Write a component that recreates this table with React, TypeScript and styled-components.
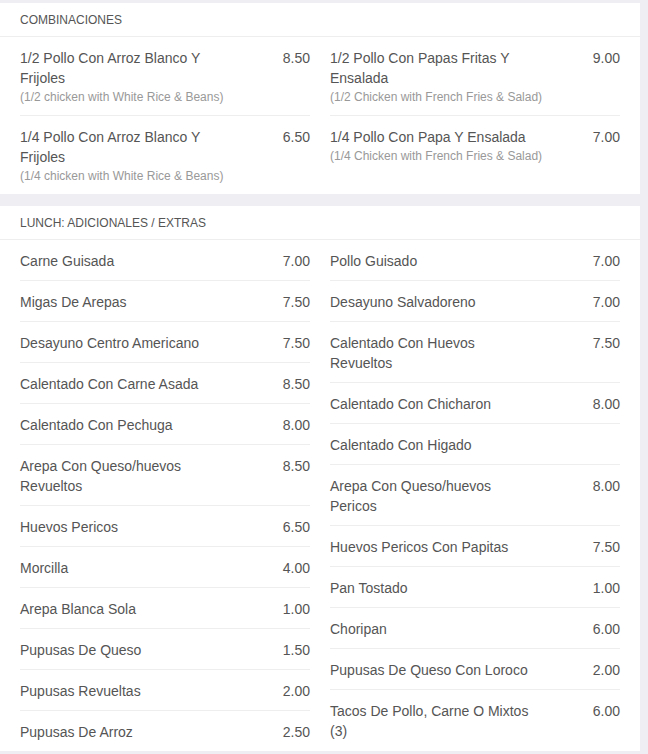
import { FC } from "react";
import styled, { createGlobalStyle } from "styled-components";

type Item = { name: string; price?: string; note?: string };

const combos: Item[][] = [
  [
    { name: "1/2 Pollo Con Arroz Blanco Y Frijoles", price: "8.50", note: "(1/2 chicken with White Rice & Beans)" },
    { name: "1/4 Pollo Con Arroz Blanco Y Frijoles", price: "6.50", note: "(1/4 chicken with White Rice & Beans)" },
  ],
  [
    { name: "1/2 Pollo Con Papas Fritas Y Ensalada", price: "9.00", note: "(1/2 Chicken with French Fries & Salad)" },
    { name: "1/4 Pollo Con Papa Y Ensalada", price: "7.00", note: "(1/4 Chicken with French Fries & Salad)" },
  ],
];

const extras: Item[][] = [
  [
    { name: "Carne Guisada", price: "7.00" },
    { name: "Migas De Arepas", price: "7.50" },
    { name: "Desayuno Centro Americano", price: "7.50" },
    { name: "Calentado Con Carne Asada", price: "8.50" },
    { name: "Calentado Con Pechuga", price: "8.00" },
    { name: "Arepa Con Queso/huevos Revueltos", price: "8.50" },
    { name: "Huevos Pericos", price: "6.50" },
    { name: "Morcilla", price: "4.00" },
    { name: "Arepa Blanca Sola", price: "1.00" },
    { name: "Pupusas De Queso", price: "1.50" },
    { name: "Pupusas Revueltas", price: "2.00" },
    { name: "Pupusas De Arroz", price: "2.50" },
  ],
  [
    { name: "Pollo Guisado", price: "7.00" },
    { name: "Desayuno Salvadoreno", price: "7.00" },
    { name: "Calentado Con Huevos Revueltos", price: "7.50" },
    { name: "Calentado Con Chicharon", price: "8.00" },
    { name: "Calentado Con Higado" },
    { name: "Arepa Con Queso/huevos Pericos", price: "8.00" },
    { name: "Huevos Pericos Con Papitas", price: "7.50" },
    { name: "Pan Tostado", price: "1.00" },
    { name: "Choripan", price: "6.00" },
    { name: "Pupusas De Queso Con Loroco", price: "2.00" },
    { name: "Tacos De Pollo, Carne O Mixtos (3)", price: "6.00" },
  ],
];

const sections = [
  { title: "Combinaciones", columns: combos },
  { title: "Lunch: Adicionales / Extras", columns: extras },
];

const App: FC = () => {
  return (
    <Page>
      <GlobalStyle />
      {sections.map((section) => (
        <Card key={section.title}>
          <Header>{section.title}</Header>
          <Columns>
            {section.columns.map((col, i) => (
              <List key={i}>
                {col.map((item) => (
                  <Row key={item.name}>
                    <Line>
                      <Name>{item.name}</Name>
                      <Price>{item.price}</Price>
                    </Line>
                    {item.note && <Note>{item.note}</Note>}
                  </Row>
                ))}
              </List>
            ))}
          </Columns>
        </Card>
      ))}
    </Page>
  );
};

export default App;

const GlobalStyle = createGlobalStyle`
  html, body {
    margin: 0;
    background: #eeeef3;
    font-family: "Liberation Sans", Arial, sans-serif;
  }
`;

const Page = styled.main`
  display: flex;
  flex-direction: column;
  gap: 12px;
  width: 640px;
  padding-top: 3px;
`;

const Card = styled.section`
  background: #fff;
`;

const Header = styled.h2`
  margin: 0;
  padding: 9px 20px 8px;
  font-size: 12px;
  line-height: 16px;
  font-weight: normal;
  text-transform: uppercase;
  color: #555;
  border-bottom: 1px solid #eee;
`;

const Columns = styled.div`
  display: grid;
  grid-template-columns: 1fr 1fr;
  column-gap: 20px;
  padding: 0 20px;
`;

const List = styled.ul`
  list-style: none;
  margin: 0;
  padding: 0;
`;

const Row = styled.li`
  padding: 11px 0 9px;
  border-bottom: 1px solid #eee;

  &:last-child {
    border-bottom: none;
  }
`;

const Line = styled.div`
  display: flex;
  font-size: 14px;
  line-height: 20px;
  color: #555;
`;

const Name = styled.span`
  flex: 0 0 205px;
`;

const Price = styled.span`
  flex: 1;
  text-align: right;
`;

const Note = styled.div`
  font-size: 12px;
  line-height: 18px;
  color: #999;
`;
